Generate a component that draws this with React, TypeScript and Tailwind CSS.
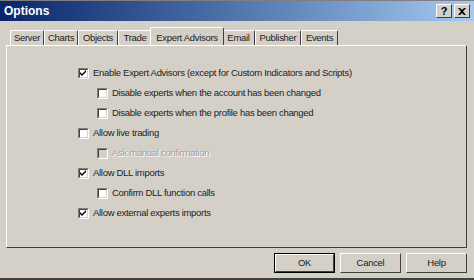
import React from "react";

const font = { fontFamily: '"Liberation Sans", Arial, sans-serif' };

function Check({ checked, disabled }: { checked?: boolean; disabled?: boolean }) {
  return (
    <div
      className={`w-[11px] h-[11px] border-t border-l border-t-[#808080] border-l-[#808080] border-b border-r border-b-white border-r-white flex items-center justify-center shrink-0 ${disabled ? "bg-[#d4d0c8]" : "bg-white"}`}
    >
      <div className="w-[9px] h-[9px] border-t border-l border-t-[#404040] border-l-[#404040] border-b border-r border-b-[#d4d0c8] border-r-[#d4d0c8] flex items-center justify-center">
        {checked && (
          <svg width="7" height="7" viewBox="0 0 7 7">
            <path d="M0 2 L2 4 L6 0 L6 2 L2 6 L0 4 Z" fill="#000" />
          </svg>
        )}
      </div>
    </div>
  );
}

function Row({ label, checked, disabled, indent }: { label: string; checked?: boolean; disabled?: boolean; indent?: boolean }) {
  return (
    <div className={`h-[20px] flex items-center gap-[4px] ${indent ? "pl-[19px]" : ""}`}>
      <Check checked={checked} disabled={disabled} />
      <span
        className={`text-[9.5px] tracking-[-0.3px] leading-none whitespace-nowrap ${disabled ? "text-[#a0a0a0] [text-shadow:1px_1px_0_#fff]" : "text-[#222]"}`}
      >
        {label}
      </span>
    </div>
  );
}

function Tab({ label, w, selected }: { label: string; w: number; selected?: boolean }) {
  if (selected) {
    return (
      <div
        style={{ width: w + 4 }}
        className="relative z-10 -mx-[2px] h-[18px] bg-[#d4d0c8] border-t border-l border-t-white border-l-white border-r border-r-[#404040] rounded-t-[2px] flex items-start justify-center pt-[3px] text-[9.5px] tracking-[-0.3px] text-[#222]"
      >
        {label}
      </div>
    );
  }
  return (
    <div
      style={{ width: w }}
      className="h-[15px] mt-[2px] bg-[#d4d0c8] border-t border-l border-t-white border-l-white border-r border-r-[#404040] rounded-t-[2px] flex items-center justify-center text-[9.5px] tracking-[-0.3px] text-[#222]"
    >
      {label}
    </div>
  );
}

function Btn({ label, def }: { label: string; def?: boolean }) {
  return (
    <div
      className={`w-[61px] h-[20px] flex items-center justify-center text-[9.5px] tracking-[-0.3px] text-[#222] bg-[#d4d0c8] ${def ? "border border-black" : ""}`}
    >
      <div className="w-full h-full border-t border-l border-t-white border-l-white border-b border-r border-b-[#404040] border-r-[#404040] flex items-center justify-center">
        {label}
      </div>
    </div>
  );
}

export default function App() {
  return (
    <div style={font} className="w-[474px] h-[280px] bg-[#d4d0c8] flex flex-col border-b-2 border-b-[#404040] overflow-hidden">
      <div className="h-[21px] bg-gradient-to-r from-[#0a246a] to-[#a6caf0] flex items-center justify-between pl-[4px] pr-[4px] border-t border-t-[#7f7f7f]">
        <span className="text-white font-bold text-[12px] leading-none">Options</span>
        <div className="flex gap-[2px]">
          <div className="w-[16px] h-[14px] bg-[#d4d0c8] border-t border-l border-t-white border-l-white border-b border-r border-b-[#404040] border-r-[#404040] flex items-center justify-center text-[11px] font-bold leading-none text-black">?</div>
          <div className="w-[16px] h-[14px] bg-[#d4d0c8] border-t border-l border-t-white border-l-white border-b border-r border-b-[#404040] border-r-[#404040] flex items-center justify-center">
            <svg width="8" height="7" viewBox="0 0 8 7"><path d="M0 0 L2 0 L4 2 L6 0 L8 0 L5 3.5 L8 7 L6 7 L4 5 L2 7 L0 7 L3 3.5 Z" fill="#000" /></svg>
          </div>
        </div>
      </div>
      <div className="pl-[10px] pt-[6px] flex items-end h-[24px]">
        <Tab label="Server" w={34} />
        <Tab label="Charts" w={34} />
        <Tab label="Objects" w={40} />
        <Tab label="Trade" w={34} />
        <Tab label="Expert Advisors" w={70} selected />
        <Tab label="Email" w={33} />
        <Tab label="Publisher" w={46} />
        <Tab label="Events" w={37} />
      </div>
      <div className="ml-[6px] w-[461px] h-[203px] border-t border-l border-t-white border-l-white border-b border-r border-b-[#404040] border-r-[#404040] pl-[71px] pt-[17px] flex flex-col">
        <Row label="Enable Expert Advisors (except for Custom Indicators and Scripts)" checked />
        <Row label="Disable experts when the account has been changed" indent />
        <Row label="Disable experts when the profile has been changed" indent />
        <Row label="Allow live trading" />
        <Row label="Ask manual confirmation" indent disabled />
        <Row label="Allow DLL imports" checked />
        <Row label="Confirm DLL function calls" indent />
        <Row label="Allow external experts imports" checked />
      </div>
      <div className="flex justify-end gap-[5px] pr-[7px] pt-[5px]">
        <Btn label="OK" def />
        <Btn label="Cancel" />
        <Btn label="Help" />
      </div>
    </div>
  );
}
